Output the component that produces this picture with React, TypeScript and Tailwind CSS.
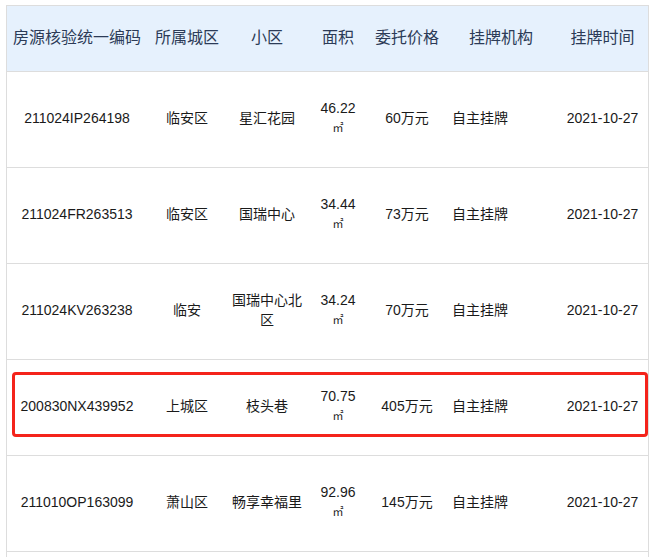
import React from "react";

type Row = {
    code: string;
    district: string;
    estate: string;
    area: string;
    price: string;
    agency: string;
    date: string;
    highlight?: boolean;
};

const rows: Row[] = [
    { code: "211024IP264198", district: "临安区", estate: "星汇花园", area: "46.22", price: "60万元", agency: "自主挂牌", date: "2021-10-27" },
    { code: "211024FR263513", district: "临安区", estate: "国瑞中心", area: "34.44", price: "73万元", agency: "自主挂牌", date: "2021-10-27" },
    { code: "211024KV263238", district: "临安", estate: "国瑞中心北区", area: "34.24", price: "70万元", agency: "自主挂牌", date: "2021-10-27" },
    { code: "200830NX439952", district: "上城区", estate: "枝头巷", area: "70.75", price: "405万元", agency: "自主挂牌", date: "2021-10-27", highlight: true },
    { code: "211010OP163099", district: "萧山区", estate: "畅享幸福里", area: "92.96", price: "145万元", agency: "自主挂牌", date: "2021-10-27" },
];

const cols = "grid grid-cols-[140px_80px_80px_62px_76px_112px_91px]";
const headers = ["房源核验统一编码", "所属城区", "小区", "面积", "委托价格", "挂牌机构", "挂牌时间"];

export default function App() {
    return (
        <div
            className="h-[557px] w-[655px] overflow-hidden bg-white pl-[6px] pt-[5px]"
            style={{ fontFamily: '"Liberation Sans", "Noto Sans CJK SC", sans-serif' }}
        >
            <div className="w-[643px] border-x border-t border-[#dddddd]">
                {/* header */}
                <div className={`${cols} h-[66px] items-center border-b border-[#dddddd] bg-[#e6f1fd] pb-[1px] text-[16px] text-[#2c3b57]`}>
                    {headers.map((h) => (
                        <div key={h} className="text-center whitespace-nowrap">
                            {h}
                        </div>
                    ))}
                </div>

                {rows.map((r) => (
                    <div
                        key={r.code}
                        className={`${cols} relative h-[96px] items-center border-b border-[#dddddd] pb-[3px] text-[14px] leading-[20px] text-[#1a1a1a]`}
                    >
                        <div className="text-center">{r.code}</div>
                        <div className="text-center">{r.district}</div>
                        <div className="px-[5px] text-center">{r.estate}</div>
                        <div className="flex flex-col items-center">
                            <span>{r.area}</span>
                            <span className="text-[11px] leading-[20px]">㎡</span>
                        </div>
                        <div className="text-center">{r.price}</div>
                        <div className="pl-[7px]">{r.agency}</div>
                        <div className="text-center">{r.date}</div>
                        {r.highlight && (
                            <div className="pointer-events-none absolute left-[5px] right-0 top-[12px] h-[65px] rounded-[4px] border-[3px] border-[#f4231b]" />
                        )}
                    </div>
                ))}

                {/* next row continues below the fold */}
                <div className="h-[20px]" />
            </div>
        </div>
    );
}
